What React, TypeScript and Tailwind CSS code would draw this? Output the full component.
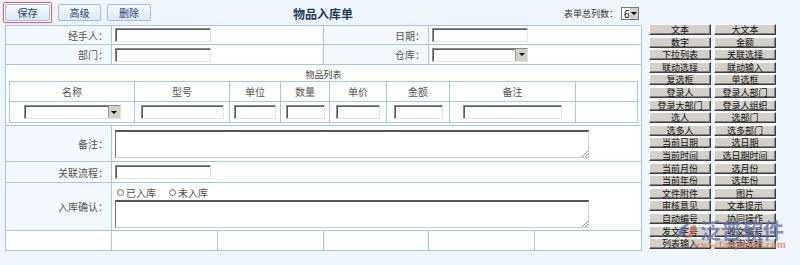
import React from "react";

const font = { fontFamily: '"Noto Sans CJK SC", "Liberation Sans", sans-serif' };

const fieldBtns: [string, string][] = [
  ["文本", "大文本"],
  ["数字", "金额"],
  ["下拉列表", "关联选择"],
  ["联动选择", "联动输入"],
  ["复选框", "单选框"],
  ["登录人", "登录人部门"],
  ["登录大部门", "登录人组织"],
  ["选人", "选部门"],
  ["选多人", "选多部门"],
  ["当前日期", "选日期"],
  ["当前时间", "选日期时间"],
  ["当前月份", "选月份"],
  ["当前年份", "选年份"],
  ["文件附件", "图片"],
  ["审核意见", "文本提示"],
  ["自动编号", "协同操作"],
  ["发文字号", "收文编号"],
  ["列表输入", "查询选择"],
];

function TextBox({ w }: { w: string }) {
  return (
    <div
      className={`${w} h-[14px] bg-white border border-[#8a8a8a] border-r-[#e2e2e2] border-b-[#e2e2e2] shadow-[inset_1px_1px_0_#5a5a5a]`}
    />
  );
}

function SelectBox({ w }: { w: string }) {
  return (
    <div
      className={`${w} h-[14px] bg-white border border-[#8a8a8a] border-r-[#e2e2e2] border-b-[#e2e2e2] shadow-[inset_1px_1px_0_#5a5a5a] flex justify-end`}
    >
      <div className="w-[12px] h-full bg-[#d4d0c8] border-l border-[#999] flex items-center justify-center">
        <div className="w-0 h-0 border-l-[3px] border-r-[3px] border-t-[3px] border-l-transparent border-r-transparent border-t-black" />
      </div>
    </div>
  );
}

function Area() {
  return (
    <div className="relative w-[474px] h-[28px] bg-white border border-[#cfcfcf] border-t-2 border-t-[#555] border-l-[#777]">
      <svg className="absolute right-0 bottom-0" width="6" height="6" viewBox="0 0 6 6">
        <path d="M6 0L0 6M6 3L3 6" stroke="#999" strokeWidth="1" />
      </svg>
    </div>
  );
}

function ToolBtn({ label }: { label: string }) {
  return (
    <div className="h-[17px] flex items-center justify-center text-[10px] text-[#1c3f6e] rounded-[2px] border border-[#9fbfe6] bg-gradient-to-b from-[#f7fafe] to-[#dbe8f7]">
      {label}
    </div>
  );
}

const lbl = "bg-[#f3f8fe] text-right pr-[3px] text-[10px] text-[#555] border border-[#a3c6eb]";
const cell = "bg-white border border-[#a3c6eb] px-[3px]";

export default function App() {
  return (
    <div className="w-[800px] h-[265px] bg-[#eff5fd] relative overflow-hidden" style={font}>
      <div className="flex">
        <div className="w-[645px] pl-[5px]">
          <div className="h-[25px] grid grid-cols-[1fr_auto_1fr] items-center w-[636px]">
            <div className="flex items-center gap-[6px]">
              <div className="border border-[#e06a6a] rounded-[2px] p-[1px] -ml-[2px] shadow-[0_0_2px_#f2b0b0]">
                <div className="w-[45px]">
                  <ToolBtn label="保存" />
                </div>
              </div>
              <div className="w-[43px]">
                <ToolBtn label="高级" />
              </div>
              <div className="w-[44px]">
                <ToolBtn label="删除" />
              </div>
            </div>
            <div className="text-[12px] font-bold text-[#1d3b60] pt-[2px]">物品入库单</div>
            <div className="flex items-center justify-end gap-[3px] pr-[2px] pt-[2px]">
              <span className="text-[9px] text-[#333]">表单总列数：</span>
              <div className="w-[18px] h-[13px] bg-white border border-[#777] flex items-center">
                <span className="text-[10px] leading-none pl-[2px] flex-1">6</span>
                <div className="w-[8px] h-full bg-[#d4d0c8] flex items-center justify-center">
                  <div className="w-0 h-0 border-l-[3px] border-r-[3px] border-t-[3px] border-l-transparent border-r-transparent border-t-black" />
                </div>
              </div>
            </div>
          </div>

          <table className="border-collapse w-[636px] table-fixed">
            <colgroup>
              <col className="w-[106px]" />
              <col className="w-[106px]" />
              <col className="w-[106px]" />
              <col className="w-[105px]" />
              <col className="w-[106px]" />
              <col className="w-[107px]" />
            </colgroup>
            <tbody>
              <tr className="h-[19px]">
                <td className={lbl}>经手人：</td>
                <td className={cell} colSpan={2}>
                  <TextBox w="w-[96px]" />
                </td>
                <td className={lbl}>日期：</td>
                <td className={cell} colSpan={2}>
                  <TextBox w="w-[96px]" />
                </td>
              </tr>
              <tr className="h-[20px]">
                <td className={lbl}>部门：</td>
                <td className={cell} colSpan={2}>
                  <TextBox w="w-[96px]" />
                </td>
                <td className={lbl}>仓库：</td>
                <td className={cell} colSpan={2}>
                  <SelectBox w="w-[96px]" />
                </td>
              </tr>
              <tr className="h-[59px]">
                <td className="bg-white border border-[#a3c6eb] px-[3px] pt-[3px] pb-[2px] align-top" colSpan={6}>
                  <div className="text-center text-[9px] leading-[13px] text-[#444]">物品列表</div>
                  <table className="border-collapse w-full table-fixed">
                    <colgroup>
                      <col className="w-[125px]" />
                      <col className="w-[95px]" />
                      <col className="w-[51px]" />
                      <col className="w-[49px]" />
                      <col className="w-[57px]" />
                      <col className="w-[63px]" />
                      <col className="w-[126px]" />
                      <col />
                    </colgroup>
                    <tbody>
                      <tr className="h-[20px] text-[10px] text-[#555] text-center">
                        {["名称", "型号", "单位", "数量", "单价", "金额", "备注", ""].map((h, i) => (
                          <td key={i} className="border border-[#a3c6eb]">
                            {h}
                          </td>
                        ))}
                      </tr>
                      <tr className="h-[21px]">
                        <td className="border border-[#a3c6eb]">
                          <div className="flex justify-center">
                            <SelectBox w="w-[97px]" />
                          </div>
                        </td>
                        <td className="border border-[#a3c6eb]">
                          <div className="flex justify-center">
                            <TextBox w="w-[83px]" />
                          </div>
                        </td>
                        <td className="border border-[#a3c6eb]">
                          <div className="flex justify-center">
                            <TextBox w="w-[42px]" />
                          </div>
                        </td>
                        <td className="border border-[#a3c6eb]">
                          <div className="flex justify-center">
                            <TextBox w="w-[39px]" />
                          </div>
                        </td>
                        <td className="border border-[#a3c6eb]">
                          <div className="flex justify-center">
                            <TextBox w="w-[44px]" />
                          </div>
                        </td>
                        <td className="border border-[#a3c6eb]">
                          <div className="flex justify-center">
                            <TextBox w="w-[49px]" />
                          </div>
                        </td>
                        <td className="border border-[#a3c6eb]">
                          <div className="flex justify-center">
                            <TextBox w="w-[99px]" />
                          </div>
                        </td>
                        <td className="border border-[#a3c6eb]" />
                      </tr>
                    </tbody>
                  </table>
                </td>
              </tr>
              <tr className="h-[36px]">
                <td className={lbl}>备注：</td>
                <td className={cell} colSpan={5}>
                  <Area />
                </td>
              </tr>
              <tr className="h-[21px]">
                <td className={lbl}>关联流程：</td>
                <td className={cell} colSpan={5}>
                  <TextBox w="w-[96px]" />
                </td>
              </tr>
              <tr className="h-[48px]">
                <td className={lbl}>入库确认：</td>
                <td className={cell} colSpan={5}>
                  <div className="flex items-center text-[10px] text-[#555] h-[13px] mb-[1px]">
                    <span className="flex items-center gap-[2px] w-[54px] pl-[2px]">
                      <span className="w-[7px] h-[7px] rounded-full border border-[#666] bg-white" />
                      已入库
                    </span>
                    <span className="flex items-center gap-[2px]">
                      <span className="w-[7px] h-[7px] rounded-full border border-[#666] bg-white" />
                      未入库
                    </span>
                  </div>
                  <Area />
                </td>
              </tr>
              <tr className="h-[20px]">
                {[0, 1, 2, 3, 4, 5].map((i) => (
                  <td key={i} className="bg-white border border-[#a3c6eb]" />
                ))}
              </tr>
            </tbody>
          </table>
        </div>

        <div className="pl-[4px] pt-[24px] grid grid-cols-[62px_62px] gap-x-[3px] gap-y-[1.6px] content-start">
          {fieldBtns.flat().map((t) => (
            <div
              key={t}
              className="h-[11px] bg-[#d4d0c8] border border-t-white border-l-white border-r-[#404040] border-b-[#404040] shadow-[inset_-1px_-1px_0_#808080] flex items-center justify-center text-[9px] leading-[9px] text-[#111] overflow-hidden"
            >
              {t}
            </div>
          ))}
        </div>
      </div>

      <div className="absolute left-[675px] top-[217px] w-[120px] h-[34px] pointer-events-none opacity-75">
        <svg className="absolute left-0 top-[2px]" width="24" height="24" viewBox="0 0 26 26">
          <path d="M4 20C2 12 8 4 18 5C12 7 9 12 10 18Z" fill="#5a6fa8" />
          <path d="M22 6C25 14 19 22 9 21C15 19 18 14 17 8Z" fill="#d9684a" />
        </svg>
        <span className="absolute left-[25px] top-0 text-[21px] leading-[24px] text-[#5a6fa8] font-bold">泛普软件</span>
        <span
          className="absolute left-[18px] top-[21px] text-[11px] leading-[12px] text-[#e0805f] font-bold"
          style={{ fontFamily: '"Liberation Serif", serif' }}
        >
          www.fanpusoft.com
        </span>
      </div>
    </div>
  );
}
